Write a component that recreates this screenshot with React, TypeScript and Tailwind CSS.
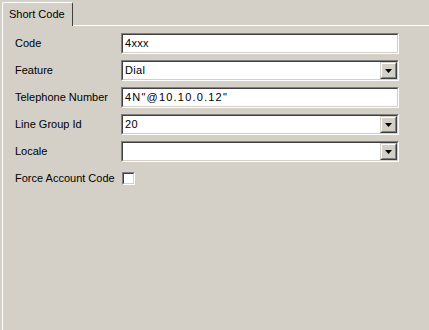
import React from "react";

const sunken =
  "border-t border-l border-t-[#808080] border-l-[#808080] border-b border-r border-b-white border-r-white";
const sunkenInner =
  "border-t border-l border-t-[#404040] border-l-[#404040] border-b border-r border-b-[#d4d0c8] border-r-[#d4d0c8]";

function TextBox({ value, wide }: { value: string; wide?: boolean }) {
  return (
    <div className={`w-[278px] h-[21px] ${sunken}`}>
      <div
        className={`h-full ${sunkenInner} bg-white flex items-center pl-[2px] text-black whitespace-nowrap ${
          wide ? "tracking-[1.2px]" : "tracking-[0.3px]"
        }`}
      >
        {value}
      </div>
    </div>
  );
}

function Select({ value }: { value: string }) {
  return (
    <div className={`w-[278px] h-[21px] ${sunken}`}>
      <div className={`h-full ${sunkenInner} bg-white flex items-center`}>
        <div className="flex-1 pl-[2px] text-black tracking-[0.3px]">{value}</div>
        <div className="w-[17px] h-[17px] border-t border-l border-t-[#d4d0c8] border-l-[#d4d0c8] border-b border-r border-b-[#404040] border-r-[#404040]">
          <div className="w-full h-full border-t border-l border-t-white border-l-white border-b border-r border-b-[#808080] border-r-[#808080] bg-[#d4d0c8] flex items-center justify-center">
            <svg width="7" height="4" viewBox="0 0 7 4">
              <path d="M0 0h7L3.5 4z" fill="#000" />
            </svg>
          </div>
        </div>
      </div>
    </div>
  );
}

function Row({ label, children }: { label: string; children: React.ReactNode }) {
  return (
    <div className="flex items-center h-[21px]">
      <div className="w-[106px] text-black whitespace-nowrap">{label}</div>
      {children}
    </div>
  );
}

export default function App() {
  return (
    <div
      className="w-[429px] h-[330px] bg-[#d4d0c8] overflow-hidden flex flex-col text-[11px] leading-none"
      style={{ fontFamily: "Tahoma, 'Liberation Sans', Arial, sans-serif" }}
    >
      <div className="flex items-end pt-[2px] pl-[2px] h-[26px]">
        <div className="h-[24px] w-[71px] border-t border-l border-white rounded-tl-[2px] rounded-tr-[2px] border-r border-r-[#404040] flex items-center pl-[6px] text-black whitespace-nowrap">
          Short Code
        </div>
        <div className="flex-1 border-b border-white" />
      </div>
      <div className="flex-1 ml-[2px] border-l border-white pl-[12px] pt-[7px] flex flex-col gap-[6px]">
        <Row label="Code">
          <TextBox value="4xxx" />
        </Row>
        <Row label="Feature">
          <Select value="Dial" />
        </Row>
        <Row label="Telephone Number">
          <TextBox value={'4N"@10.10.0.12"'} wide />
        </Row>
        <Row label="Line Group Id">
          <Select value="20" />
        </Row>
        <Row label="Locale">
          <Select value="" />
        </Row>
        <div className="flex items-center h-[21px]">
          <div className="w-[107px] text-black whitespace-nowrap">Force Account Code</div>
          <div className={`w-[13px] h-[13px] ${sunken}`}>
            <div className={`h-full ${sunkenInner} bg-white`} />
          </div>
        </div>
      </div>
    </div>
  );
}
